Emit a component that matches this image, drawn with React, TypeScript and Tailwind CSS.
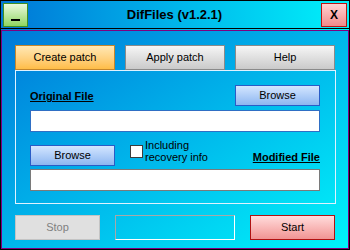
export default function App() {
    return (
        <div className="w-[350px] h-[250px] border border-black bg-gradient-to-r from-[#0076d6] to-[#00f2fa] flex flex-col font-['Liberation_Sans',Arial,sans-serif] text-[11px] text-black select-none">
            {/* title bar */}
            <div className="h-[28px] shrink-0 border-b border-black flex items-start pt-[2px] pl-[2px] pr-[2px]">
                <button className="w-[25px] h-[24px] border border-[#3f8f22] bg-gradient-to-b from-[#eaf9dc] to-[#8fd65e] flex items-start justify-center pt-[15px]">
                    <span className="block w-[9px] h-[2px] bg-black" />
                </button>
                <div className="flex-1 text-center font-bold text-[13px] leading-[24px]">DifFiles (v1.2.1)</div>
                <button className="w-[26px] h-[24px] border border-[#b81414] bg-gradient-to-b from-[#ffd2d2] to-[#f08a8a] flex items-center justify-center font-bold text-[12px] leading-none">
                    X
                </button>
            </div>

            {/* main area */}
            <div className="mt-px flex-1 border border-[#800080] bg-gradient-to-br from-[#0078d8] to-[#00f4fa] pl-[13px] pt-[14px]">
                <div className="flex gap-[10px]">
                    <Tab label="Create patch" active />
                    <Tab label="Apply patch" />
                    <Tab label="Help" />
                </div>

                <div className="w-[321px] h-[134px] border border-[#dff2ff] pl-[14px] pr-[15px] pt-[14px]">
                    <div className="flex items-end justify-between">
                        <span className="font-bold underline leading-[13px] mb-[3px]">Original File</span>
                        <BlueButton label="Browse" />
                    </div>
                    <div className="mt-[4px] h-[22px] bg-white border border-[#2f6fc4]" />

                    <div className="mt-[13px] flex items-start">
                        <BlueButton label="Browse" />
                        <label className="ml-[15px] flex items-start gap-[2px]">
                            <span className="w-[13px] h-[13px] bg-white border border-[#3c3c3c]" />
                            <span className="leading-[12px] -mt-[6px]">Including<br />recovery info</span>
                        </label>
                        <span className="ml-auto mt-[6px] font-bold underline leading-[13px]">Modified File</span>
                    </div>
                    <div className="mt-[3px] h-[22px] bg-white border border-[#7a7a7a]" />
                </div>

                <div className="mt-[11px] flex gap-[15px]">
                    <button className="w-[85px] h-[25px] border border-[#c4c4c4] bg-[#e0e0e0] text-[#808080]">Stop</button>
                    <div className="w-[120px] h-[25px] border border-t-[#a8a8a8] border-l-[#a8a8a8] border-b-white border-r-white" />
                    <button className="w-[85px] h-[25px] border border-[#b01212] bg-gradient-to-b from-[#ffdcdc] to-[#f09494]">Start</button>
                </div>
            </div>
        </div>
    );
}

function Tab({ label, active }: { label: string; active?: boolean }) {
    return (
        <button
            className={
                'w-[100px] h-[25px] border ' +
                (active
                    ? 'border-[#c4862c] bg-gradient-to-b from-[#ffe8b4] to-[#ffbd46]'
                    : 'border-[#8a8a8a] bg-gradient-to-b from-[#f6f6f6] to-[#cacaca]')
            }
        >
            {label}
        </button>
    );
}

function BlueButton({ label }: { label: string }) {
    return (
        <button className="w-[85px] h-[21px] border border-[#2a5cc6] bg-gradient-to-b from-[#d4e6ff] to-[#8db6f0]">
            {label}
        </button>
    );
}
